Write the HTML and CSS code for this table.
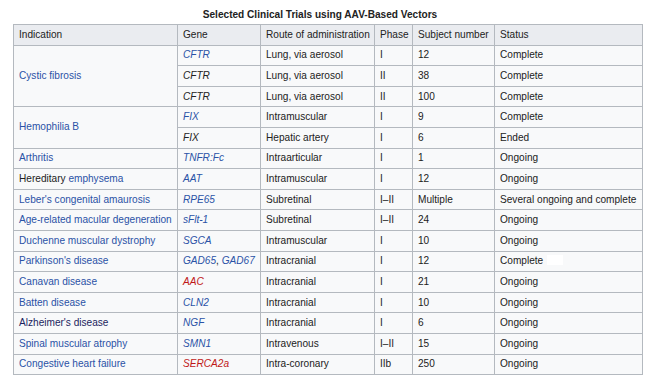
FILE: index.html
```html
<!DOCTYPE html>
<html>
<head>
<meta charset="utf-8">
<link rel="stylesheet" href="styles.css">
</head>
<body>
<table class="wikitable">
  <caption class="title">Selected Clinical Trials using AAV-Based Vectors</caption>
  <colgroup>
    <col class="c-ind"><col class="c-gene"><col class="c-route"><col class="c-phase"><col class="c-num"><col class="c-status">
  </colgroup>
  <thead>
    <tr><th>Indication</th><th>Gene</th><th>Route of administration</th><th>Phase</th><th>Subject number</th><th>Status</th></tr>
  </thead>
  <tbody>
    <tr><td rowspan="3"><a class="link">Cystic fibrosis</a></td><td><i class="link">CFTR</i></td><td>Lung, via aerosol</td><td>I</td><td>12</td><td>Complete</td></tr>
    <tr><td><i>CFTR</i></td><td>Lung, via aerosol</td><td>II</td><td>38</td><td>Complete</td></tr>
    <tr><td><i>CFTR</i></td><td>Lung, via aerosol</td><td>II</td><td>100</td><td>Complete</td></tr>
    <tr><td rowspan="2"><a class="link">Hemophilia B</a></td><td><i class="link">FIX</i></td><td>Intramuscular</td><td>I</td><td>9</td><td>Complete</td></tr>
    <tr><td><i>FIX</i></td><td>Hepatic artery</td><td>I</td><td>6</td><td>Ended</td></tr>
    <tr><td><a class="link">Arthritis</a></td><td><i class="link">TNFR:Fc</i></td><td>Intraarticular</td><td>I</td><td>1</td><td>Ongoing</td></tr>
    <tr><td>Hereditary <a class="link">emphysema</a></td><td><i class="link">AAT</i></td><td>Intramuscular</td><td>I</td><td>12</td><td>Ongoing</td></tr>
    <tr><td><a class="link">Leber's congenital amaurosis</a></td><td><i class="link">RPE65</i></td><td>Subretinal</td><td>I–II</td><td>Multiple</td><td>Several ongoing and complete</td></tr>
    <tr><td><a class="link">Age-related macular degeneration</a></td><td><i class="link">sFlt-1</i></td><td>Subretinal</td><td>I–II</td><td>24</td><td>Ongoing</td></tr>
    <tr><td><a class="link">Duchenne muscular dystrophy</a></td><td><i class="link">SGCA</i></td><td>Intramuscular</td><td>I</td><td>10</td><td>Ongoing</td></tr>
    <tr><td><a class="link">Parkinson's disease</a></td><td><i class="link">GAD65</i>, <i class="link">GAD67</i></td><td>Intracranial</td><td>I</td><td>12</td><td>Complete<span class="blank"></span></td></tr>
    <tr><td><a class="link">Canavan disease</a></td><td><i class="new">AAC</i></td><td>Intracranial</td><td>I</td><td>21</td><td>Ongoing</td></tr>
    <tr><td><a class="link">Batten disease</a></td><td><i class="link">CLN2</i></td><td>Intracranial</td><td>I</td><td>10</td><td>Ongoing</td></tr>
    <tr><td><a class="visited">Alzheimer's disease</a></td><td><i class="link">NGF</i></td><td>Intracranial</td><td>I</td><td>6</td><td>Ongoing</td></tr>
    <tr><td><a class="link">Spinal muscular atrophy</a></td><td><i class="link">SMN1</i></td><td>Intravenous</td><td>I–II</td><td>15</td><td>Ongoing</td></tr>
    <tr><td><a class="link">Congestive heart failure</a></td><td><i class="new">SERCA2a</i></td><td>Intra-coronary</td><td>IIb</td><td>250</td><td>Ongoing</td></tr>
  </tbody>
</table>
</body>
</html>
```
FILE: styles.css
```css
html, body {
  margin: 0;
  padding: 0;
  background: #ffffff;
}
body {
  font-family: "Liberation Sans", Arial, sans-serif;
  font-size: 10.1px;
  color: #222222;
}
.wikitable {
  margin-left: 13px;
  width: 629px;
  table-layout: fixed;
  border-collapse: collapse;
  background: #f8f9fa;
}
.title {
  font-weight: bold;
  line-height: 14px;
  padding: 8px 16px 2px 0;
  text-align: center;
  color: #222222;
}
.c-ind { width: 164px; }
.c-gene { width: 83px; }
.c-route { width: 114px; }
.c-phase { width: 38px; }
.c-num { width: 82px; }
.c-status { width: 148px; }
.wikitable th,
.wikitable td {
  border: 1px solid #b4b9bf;
  padding: 3.8px 5px;
  line-height: 12px;
  text-align: left;
  vertical-align: middle;
  white-space: nowrap;
  overflow: hidden;
}
.wikitable th {
  background: #eaecf0;
  font-weight: normal;
}
.link {
  color: #2a52a6;
}
.visited {
  color: #1b1f5e;
}
.new {
  color: #c01818;
}
.blank {
  display: inline-block;
  width: 16px;
  height: 10px;
  margin-left: 4px;
  vertical-align: -1px;
  background: #ffffff;
}
```
